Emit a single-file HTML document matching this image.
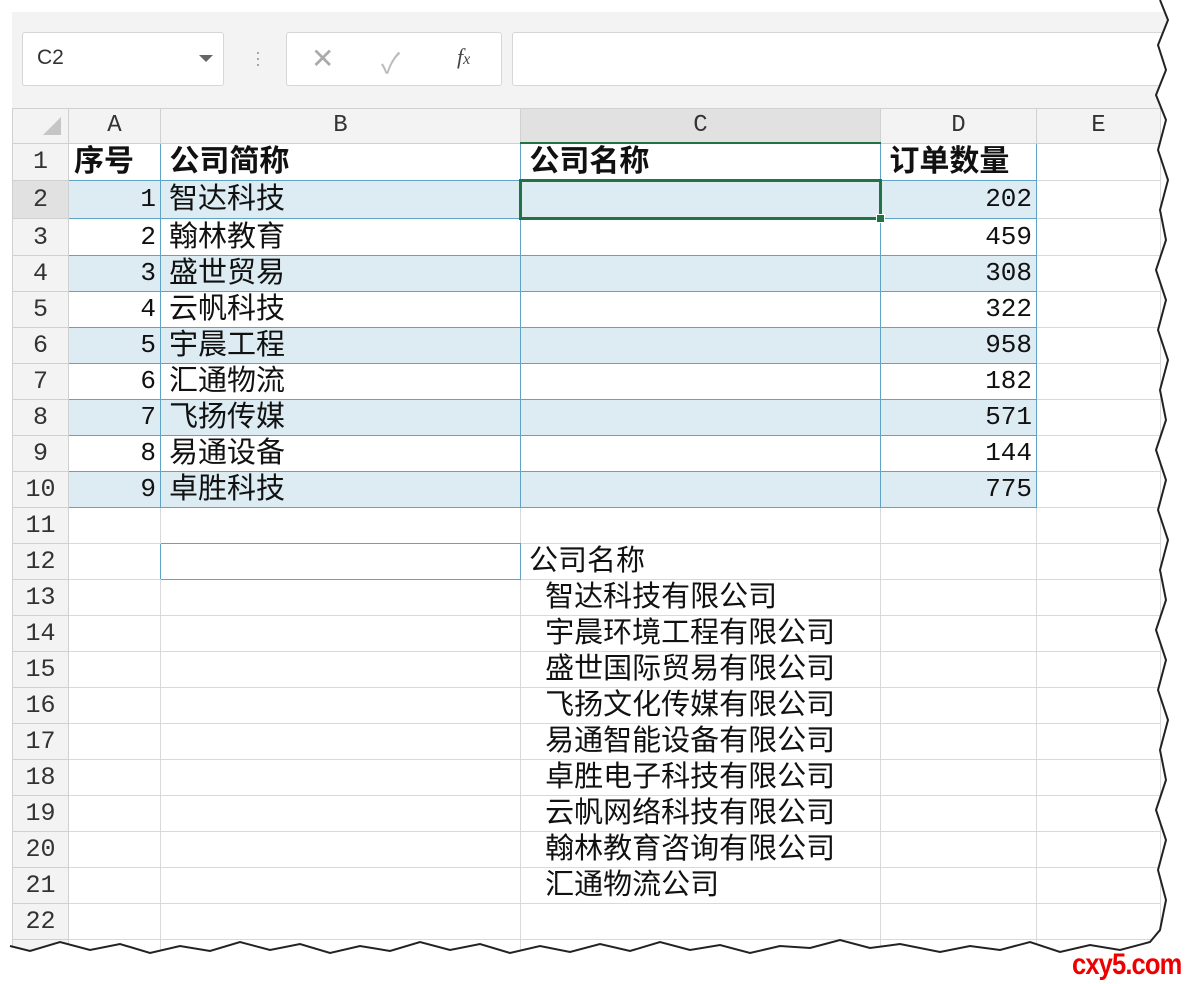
<!DOCTYPE html>
<html><head><meta charset="utf-8"><style>
body{margin:0;width:1192px;height:984px;background:#fff;position:relative;overflow:hidden;font-family:"Liberation Sans","Noto Sans CJK SC",sans-serif}
.tb{position:absolute;left:12px;top:12px;width:1160px;height:96px;background:#f3f3f3}
.box{position:absolute;background:#fff;border:1px solid #d6d6d6;border-radius:3px}
table{position:absolute;left:12px;top:108px;border-collapse:collapse;table-layout:fixed}
td{border:1px solid #d9d9d9;padding:0;height:35px;font-size:29px;line-height:35px;white-space:nowrap;overflow:visible;color:#111}
tr.h td{height:33px;line-height:33px;background:#f3f3f3;font-family:"Liberation Mono","Noto Serif CJK SC",monospace;font-size:24px;text-align:center;color:#333;border-color:#d0d0d0}
td.rn{background:#f3f3f3;font-family:"Liberation Mono","Noto Serif CJK SC",monospace;font-size:25px;text-align:center;color:#333;border-color:#d0d0d0}
td.t{border-color:#5fa3c6}
tr.f td.t{background:#ddebf2}
td.n{text-align:right;padding-right:4px;font-family:"Liberation Mono",monospace;font-size:26px}
td.b{font-weight:bold;font-size:30px}
</style></head><body>
<div class="tb">
<div class="box" style="left:10px;top:20px;width:200px;height:52px"><span style="position:absolute;left:14px;top:13px;font-size:21px;color:#333">C2</span><span style="position:absolute;left:176px;top:22px;width:0;height:0;border-left:7px solid transparent;border-right:7px solid transparent;border-top:7px solid #666"></span></div>
<div style="position:absolute;left:243px;top:37px;color:#999;font-size:18px;line-height:6px">·<br>·<br>·</div>
<div class="box" style="left:274px;top:20px;width:214px;height:52px">
<span style="position:absolute;left:24px;top:9px;font-size:28px;color:#aaa">✕</span>
<span style="position:absolute;left:94px;top:9px;font-size:28px;color:#bbb">✓</span>
<span style="position:absolute;left:170px;top:11px;font-size:22px;color:#444;font-family:'Liberation Serif',serif;font-style:italic">f<span style="font-size:16px">x</span></span></div>
<div class="box" style="left:500px;top:20px;width:680px;height:52px"></div>
</div>
<table>
<colgroup><col style="width:56px"><col style="width:92px"><col style="width:360px"><col style="width:360px"><col style="width:156px"><col style="width:124px"></colgroup>
<tr class="h"><td style="position:relative"><span style="position:absolute;left:30px;top:8px;width:0;height:0;border-left:18px solid transparent;border-bottom:18px solid #c5c5c5"></span></td><td>A</td><td>B</td><td style="background:#e1e1e1;border-bottom:2px solid #217346">C</td><td>D</td><td>E</td></tr>
<tr><td class="rn">1</td><td class="t b" style="padding-left:5px">序号</td><td class="t b">&nbsp;公司简称</td><td class="t b">&nbsp;公司名称</td><td class="t b">&nbsp;订单数量</td><td></td></tr>
<tr class="f"><td class="rn" style="background:#e1e1e1">2</td><td class="t n">1</td><td class="t">&nbsp;智达科技</td><td class="t" style="border:3px solid #217346;position:relative"><span style="position:absolute;right:-6px;bottom:-6px;width:7px;height:7px;background:#217346;border:1px solid #fff"></span></td><td class="t n">202</td><td></td></tr>
<tr><td class="rn">3</td><td class="t n">2</td><td class="t">&nbsp;翰林教育</td><td class="t"></td><td class="t n">459</td><td></td></tr>
<tr class="f"><td class="rn">4</td><td class="t n">3</td><td class="t">&nbsp;盛世贸易</td><td class="t"></td><td class="t n">308</td><td></td></tr>
<tr><td class="rn">5</td><td class="t n">4</td><td class="t">&nbsp;云帆科技</td><td class="t"></td><td class="t n">322</td><td></td></tr>
<tr class="f"><td class="rn">6</td><td class="t n">5</td><td class="t">&nbsp;宇晨工程</td><td class="t"></td><td class="t n">958</td><td></td></tr>
<tr><td class="rn">7</td><td class="t n">6</td><td class="t">&nbsp;汇通物流</td><td class="t"></td><td class="t n">182</td><td></td></tr>
<tr class="f"><td class="rn">8</td><td class="t n">7</td><td class="t">&nbsp;飞扬传媒</td><td class="t"></td><td class="t n">571</td><td></td></tr>
<tr><td class="rn">9</td><td class="t n">8</td><td class="t">&nbsp;易通设备</td><td class="t"></td><td class="t n">144</td><td></td></tr>
<tr class="f"><td class="rn">10</td><td class="t n">9</td><td class="t">&nbsp;卓胜科技</td><td class="t"></td><td class="t n">775</td><td></td></tr>
<tr><td class="rn">11</td><td></td><td style="border-bottom-color:#5fa3c6"></td><td></td><td></td><td></td></tr>
<tr><td class="rn">12</td><td style="border-right-color:#5fa3c6"></td><td class="t"></td><td>&nbsp;公司名称</td><td></td><td></td></tr>
<tr><td class="rn">13</td><td></td><td></td><td>&nbsp;&nbsp;&nbsp;智达科技有限公司</td><td></td><td></td></tr>
<tr><td class="rn">14</td><td></td><td></td><td>&nbsp;&nbsp;&nbsp;宇晨环境工程有限公司</td><td></td><td></td></tr>
<tr><td class="rn">15</td><td></td><td></td><td>&nbsp;&nbsp;&nbsp;盛世国际贸易有限公司</td><td></td><td></td></tr>
<tr><td class="rn">16</td><td></td><td></td><td>&nbsp;&nbsp;&nbsp;飞扬文化传媒有限公司</td><td></td><td></td></tr>
<tr><td class="rn">17</td><td></td><td></td><td>&nbsp;&nbsp;&nbsp;易通智能设备有限公司</td><td></td><td></td></tr>
<tr><td class="rn">18</td><td></td><td></td><td>&nbsp;&nbsp;&nbsp;卓胜电子科技有限公司</td><td></td><td></td></tr>
<tr><td class="rn">19</td><td></td><td></td><td>&nbsp;&nbsp;&nbsp;云帆网络科技有限公司</td><td></td><td></td></tr>
<tr><td class="rn">20</td><td></td><td></td><td>&nbsp;&nbsp;&nbsp;翰林教育咨询有限公司</td><td></td><td></td></tr>
<tr><td class="rn">21</td><td></td><td></td><td>&nbsp;&nbsp;&nbsp;汇通物流公司</td><td></td><td></td></tr>
<tr><td class="rn">22</td><td></td><td></td><td></td><td></td><td></td></tr>
<tr><td class="rn"></td><td></td><td></td><td></td><td></td><td></td></tr>
</table>
<svg width="1192" height="984" style="position:absolute;left:0;top:0">
<path d="M1192,0 L1160,0 L1168,20 L1158,45 L1166,70 L1156,95 L1166,120 L1158,150 L1168,180 L1160,210 L1166,240 L1156,270 L1166,300 L1158,330 L1168,360 L1160,390 L1166,420 L1156,450 L1166,480 L1158,510 L1168,540 L1160,570 L1166,600 L1156,630 L1166,660 L1158,690 L1168,720 L1160,750 L1166,780 L1156,810 L1166,840 L1158,870 L1166,900 L1160,930 L1150,942 L1120,950 L1090,945 L1060,952 L1030,942 L1000,950 L970,946 L940,952 L900,944 L870,948 L840,940 L810,948 L780,946 L750,953 L720,945 L690,950 L660,942 L630,951 L600,944 L570,952 L540,946 L510,953 L480,944 L450,950 L420,942 L390,951 L360,946 L330,953 L300,944 L270,950 L240,942 L210,951 L180,946 L150,953 L120,944 L90,950 L60,942 L30,951 L10,946 L0,950 L0,984 L1192,984 Z" fill="#fff" stroke="none"/>
<path d="M1160,0 L1168,20 L1158,45 L1166,70 L1156,95 L1166,120 L1158,150 L1168,180 L1160,210 L1166,240 L1156,270 L1166,300 L1158,330 L1168,360 L1160,390 L1166,420 L1156,450 L1166,480 L1158,510 L1168,540 L1160,570 L1166,600 L1156,630 L1166,660 L1158,690 L1168,720 L1160,750 L1166,780 L1156,810 L1166,840 L1158,870 L1166,900 L1160,930 L1150,942 L1120,950 L1090,945 L1060,952 L1030,942 L1000,950 L970,946 L940,952 L900,944 L870,948 L840,940 L810,948 L780,946 L750,953 L720,945 L690,950 L660,942 L630,951 L600,944 L570,952 L540,946 L510,953 L480,944 L450,950 L420,942 L390,951 L360,946 L330,953 L300,944 L270,950 L240,942 L210,951 L180,946 L150,953 L120,944 L90,950 L60,942 L30,951 L10,946" fill="none" stroke="#222" stroke-width="2"/>
</svg>
<div style="position:absolute;left:1072px;top:948px;font-family:'Liberation Sans',sans-serif;font-weight:bold;font-size:30px;color:#e00;transform:scaleX(0.85);transform-origin:left;letter-spacing:-1px">cxy5.com</div>
</body></html>
